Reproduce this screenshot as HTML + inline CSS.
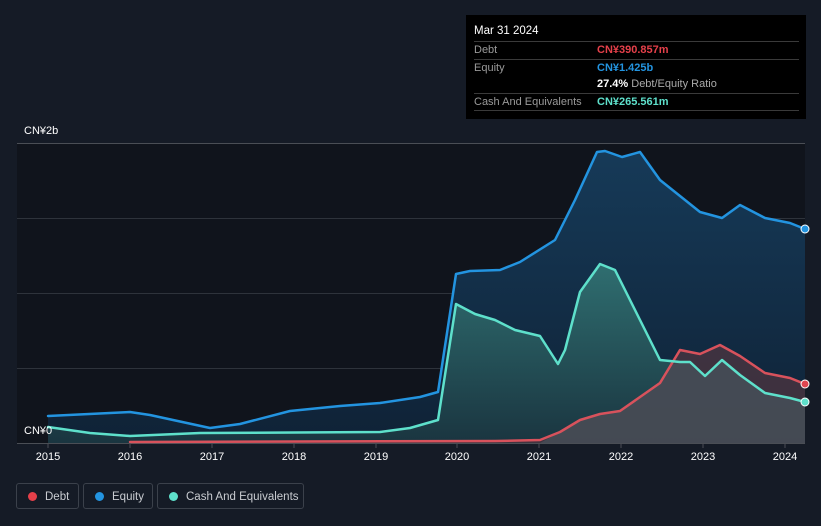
<!DOCTYPE html><html><head><style>
body{margin:0;width:821px;height:526px;background:#151b26;font-family:"Liberation Sans",sans-serif;overflow:hidden;position:relative}
.tt{position:absolute;left:466px;top:15px;width:340px;height:104px;background:#000;font-size:11px}
.tt .h{position:absolute;left:8px;top:10px;color:#fff;font-size:11.5px}
.row{position:absolute;left:8px;width:325px;border-top:1px solid #3a3a3a;height:17px}
.row span{position:absolute;top:2px}
.l{left:0;color:#9a9a9a}.v{left:123px;font-weight:bold}
.leg{position:absolute;top:483px;height:26px;border:1px solid #3b414b;border-radius:3px;color:#c9ccd1;font-size:11.5px;line-height:26px;box-sizing:border-box}
.leg i{position:absolute;left:11px;top:8px;width:9px;height:9px;border-radius:50%}
.leg span{position:absolute;left:28px}
.ax{position:absolute;top:451px;color:#fff;font-size:11px;transform:translateX(-50%)}
</style></head><body>
<svg width="821" height="526" style="position:absolute;left:0;top:0">
<defs>
<linearGradient id="ge" x1="0" y1="0" x2="0" y2="1"><stop offset="0" stop-color="#163a58"/><stop offset="1" stop-color="#0f2236"/></linearGradient>
<linearGradient id="gc" x1="0" y1="0" x2="0" y2="1"><stop offset="0" stop-color="#2f6e70"/><stop offset="1" stop-color="#1a3540"/></linearGradient>
</defs>
<rect x="17" y="143" width="788" height="300" fill="#10141c"/>
<g stroke="#2e333b" stroke-width="1"><line x1="17" y1="143.5" x2="805" y2="143.5" stroke="#4a4e55"/><line x1="17" y1="218.5" x2="805" y2="218.5"/><line x1="17" y1="293.5" x2="805" y2="293.5"/><line x1="17" y1="368.5" x2="805" y2="368.5"/><line x1="17" y1="443.5" x2="805" y2="443.5" stroke="#4a4e55"/></g>
<polygon fill="url(#ge)" points="48,416 130,412 150,415 210,428 240,424 290,411 340,406 380,403 420,397 438,392 456,274 470,271 500,270 520,262 555,240 575,200 597,152 605,151 622,157 640,152 660,180 680,196 700,212 722,218 740,205 765,218 790,223 805,229 805,443 48,443"/>
<polygon fill="url(#gc)" points="48,427 90,433 130,436 200,433 380,432 410,428 438,420 456,304 475,314 495,320 515,330 540,336 558,364 565,350 580,292 600,264 615,270 640,320 660,360 680,362 690,362 705,376 722,360 740,375 765,393 790,398 805,402 805,443 48,443"/>
<polygon fill="#4a3440" opacity="0.8" points="130,442 495,441 540,440 560,432 580,420 600,414 620,411 640,397 660,383 680,350 700,354 720,345 740,356 765,373 790,378 805,384 805,443 130,443"/>
<polygon fill="#454d57" opacity="0.85" points="560,432 580,420 600,414 620,411 640,397 660,383 673,364 680,362 690,362 705,376 722,360 740,375 765,393 790,398 805,402 805,443 540,443"/>
<g fill="none" stroke-width="2.5" stroke-linejoin="round" stroke-linecap="round">
<polyline stroke="#d8525c" points="130,442 495,441 540,440 560,432 580,420 600,414 620,411 640,397 660,383 680,350 700,354 720,345 740,356 765,373 790,378 805,384"/>
<polyline stroke="#2394e0" points="48,416 130,412 150,415 210,428 240,424 290,411 340,406 380,403 420,397 438,392 456,274 470,271 500,270 520,262 555,240 575,200 597,152 605,151 622,157 640,152 660,180 680,196 700,212 722,218 740,205 765,218 790,223 805,229"/>
<polyline stroke="#5ee0cb" points="48,427 90,433 130,436 200,433 380,432 410,428 438,420 456,304 475,314 495,320 515,330 540,336 558,364 565,350 580,292 600,264 615,270 640,320 660,360 680,362 690,362 705,376 722,360 740,375 765,393 790,398 805,402"/>
</g>
<circle cx="805" cy="229" r="4" fill="#2394e0" stroke="#fff" stroke-width="1"/>
<circle cx="805" cy="384" r="4" fill="#e04550" stroke="#fff" stroke-width="1"/>
<circle cx="805" cy="402" r="4" fill="#5ee0cb" stroke="#fff" stroke-width="1"/>
<g stroke="#4a4e55"><line x1="48" y1="443" x2="48" y2="448"/><line x1="130" y1="443" x2="130" y2="448"/><line x1="212" y1="443" x2="212" y2="448"/><line x1="294" y1="443" x2="294" y2="448"/><line x1="376" y1="443" x2="376" y2="448"/><line x1="457" y1="443" x2="457" y2="448"/><line x1="539" y1="443" x2="539" y2="448"/><line x1="621" y1="443" x2="621" y2="448"/><line x1="703" y1="443" x2="703" y2="448"/><line x1="785" y1="443" x2="785" y2="448"/></g>
</svg>
<div style="position:absolute;left:24px;top:125px;color:#fff;font-size:11px">CN¥2b</div>
<div style="position:absolute;left:24px;top:425px;color:#fff;font-size:11px">CN¥0</div>
<div class="ax" style="left:48px">2015</div><div class="ax" style="left:130px">2016</div><div class="ax" style="left:212px">2017</div><div class="ax" style="left:294px">2018</div><div class="ax" style="left:376px">2019</div><div class="ax" style="left:457px">2020</div><div class="ax" style="left:539px">2021</div><div class="ax" style="left:621px">2022</div><div class="ax" style="left:703px">2023</div><div class="ax" style="left:785px">2024</div>
<div class="tt">
<div class="h">Mar 31 2024</div>
<div class="row" style="top:26px"><span class="l">Debt</span><span class="v" style="color:#e5404a">CN¥390.857m</span></div>
<div class="row" style="top:44px"><span class="l">Equity</span><span class="v" style="color:#2394e0">CN¥1.425b</span></div>
<div class="row" style="top:61px;border-top:none"><span class="v" style="color:#fff">27.4% <b style="font-weight:normal;color:#aaa">Debt/Equity Ratio</b></span></div>
<div class="row" style="top:78px;height:16px;border-bottom:1px solid #3a3a3a"><span class="l">Cash And Equivalents</span><span class="v" style="color:#5ee0cb">CN¥265.561m</span></div>
</div>
<div class="leg" style="left:16px;width:63px"><i style="background:#e5404a"></i><span>Debt</span></div>
<div class="leg" style="left:83px;width:70px"><i style="background:#2394e0"></i><span>Equity</span></div>
<div class="leg" style="left:157px;width:147px"><i style="background:#5ee0cb"></i><span>Cash And Equivalents</span></div>
</body></html>
